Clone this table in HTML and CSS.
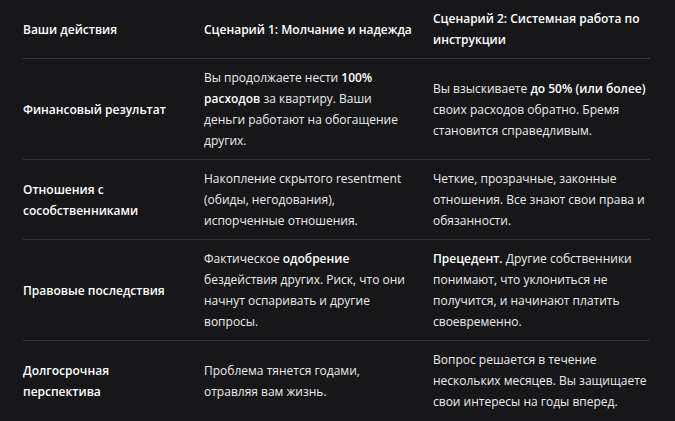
FILE: index.html
```html
<!DOCTYPE html>
<html lang="ru">
<head>
<meta charset="utf-8">
<link rel="stylesheet" href="styles.css">
</head>
<body>
<div class="wrap">
<table class="cmp">
  <colgroup>
    <col class="c1"><col class="c2"><col class="c3">
  </colgroup>
  <thead>
    <tr>
      <th>Ваши действия</th>
      <th>Сценарий 1: Молчание и надежда</th>
      <th>Сценарий 2: Системная работа по инструкции</th>
    </tr>
  </thead>
  <tbody>
    <tr>
      <td class="lbl">Финансовый результат</td>
      <td>Вы продолжаете нести <b>100%</b> <b>расходов</b> за квартиру. Ваши деньги работают на обогащение других.</td>
      <td>Вы взыскиваете <b>до 50% (или более)</b> своих расходов обратно. Бремя становится справедливым.</td>
    </tr>
    <tr>
      <td class="lbl">Отношения с сособственниками</td>
      <td>Накопление скрытого resentment (обиды, негодования), испорченные отношения.</td>
      <td>Четкие, прозрачные, законные отношения. Все знают свои права и обязанности.</td>
    </tr>
    <tr>
      <td class="lbl">Правовые последствия</td>
      <td>Фактическое <b>одобрение</b> бездействия других. Риск, что они начнут оспаривать и другие вопросы.</td>
      <td><b>Прецедент.</b> Другие собственники понимают, что уклониться не получится, и начинают платить своевременно.</td>
    </tr>
    <tr>
      <td class="lbl">Долгосрочная перспектива</td>
      <td>Проблема тянется годами, отравляя вам жизнь.</td>
      <td>Вопрос решается в течение нескольких месяцев. Вы защищаете свои интересы на годы вперед.</td>
    </tr>
  </tbody>
</table>
</div>
</body>
</html>
```
FILE: styles.css
```css
html, body {
  margin: 0;
  padding: 0;
  background: #171719;
}
body {
  font-family: "Open Sans", "Noto Sans", sans-serif;
  font-size: 12px;
  line-height: 21px;
  color: #ececec;
}
.wrap {
  padding: 0 25px 0 23px;
}
.cmp {
  width: 627px;
  border-collapse: collapse;
  table-layout: fixed;
}
.c1 { width: 181px; }
.c2 { width: 229px; }
.c3 { width: 217px; }
.cmp th {
  text-align: left;
  font-weight: 600;
  color: #ffffff;
  vertical-align: middle;
  padding: 8px 16px 8px 0;
  border-bottom: 1px solid #3a3a3c;
}
.cmp td {
  vertical-align: middle;
  padding: 8px 24px 8px 0;
  border-bottom: 1px solid #343436;
}
.cmp th:last-child, .cmp td:last-child {
  padding-right: 0;
}
.cmp tbody tr:last-child td {
  border-bottom: none;
}
.cmp td.lbl {
  font-weight: 600;
  color: #ffffff;
}
.cmp b {
  font-weight: 600;
  color: #ffffff;
}
```
